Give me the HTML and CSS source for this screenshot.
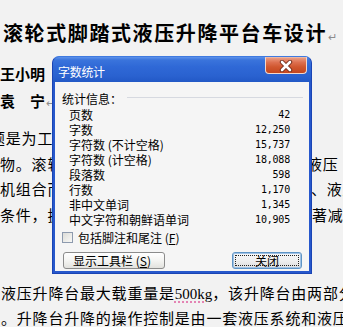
FILE: index.html
```html
<!DOCTYPE html>
<html lang="zh">
<head>
<meta charset="utf-8">
<link rel="stylesheet" href="styles.css">
</head>
<body>
<div class="doc">
  <div class="title">滚轮式脚踏式液压升降平台车设计<span class="ret">↵</span></div>
  <div class="author a1">王小明</div>
  <div class="author">袁　宁<span class="ret">↵</span></div>
  <div class="lines">
    <div class="line l1"><span class="left">题是为工业生产设计的一种</span></div>
    <div class="line"><span class="left w307">物。滚轮式脚踏式液压升降</span><span class="right">液压</span></div>
    <div class="line"><span class="left w311">机组合而成的升降装置具有</span><span class="right">、液压</span></div>
    <div class="line"><span class="left w312">条件，拢折叠方便体积小重</span><span class="right">著减</span></div>
    <div class="line"></div>
    <div class="line"></div>
    <div class="line l7"><span class="left">液压升降台最大载重量是<span class="latin">500kg</span>，该升降台由两部分</span></div>
    <div class="line"><span class="left">。升降台升降的操作控制是由一套液压系统和液压</span></div>
  </div>
</div>

<div class="dialog">
  <div class="titlebar">
    <span class="ttext">字数统计</span>
    <span class="closebtn">
      <svg width="18" height="12" viewBox="0 0 18 12">
        <path d="M5 2 L13 10 M13 2 L5 10" stroke="#6e2a18" stroke-width="4.4" stroke-linecap="round" fill="none"/>
        <path d="M5 2 L13 10 M13 2 L5 10" stroke="#ffffff" stroke-width="2.6" stroke-linecap="round" fill="none"/>
      </svg>
    </span>
  </div>
  <div class="client">
    <div class="group-head"><span>统计信息：</span><span class="rule"></span></div>
    <div class="stats">
      <span>页数</span><span class="num">42</span>
      <span>字数</span><span class="num">12,250</span>
      <span>字符数 (不计空格)</span><span class="num">15,737</span>
      <span>字符数 (计空格)</span><span class="num">18,088</span>
      <span>段落数</span><span class="num">598</span>
      <span>行数</span><span class="num">1,170</span>
      <span>非中文单词</span><span class="num">1,345</span>
      <span>中文字符和朝鲜语单词</span><span class="num">10,905</span>
    </div>
    <div class="check-row"><span class="checkbox"></span><span>包括脚注和尾注 (<u>F</u>)</span></div>
    <div class="btn-row">
      <span class="btn btn-tools">显示工具栏 (<u>S</u>)</span>
      <span class="btn btn-close"><span class="focus">关闭</span></span>
    </div>
  </div>
</div>
</body>
</html>
```

FILE: styles.css
```css
html, body {
  margin: 0;
  padding: 0;
}
body {
  width: 343px;
  height: 327px;
  overflow: hidden;
  background: #f2f2f2;
  position: relative;
  font-family: "Noto Sans CJK SC", "Noto Sans", sans-serif;
  color: #000;
}
.doc {
  padding-top: 18px;
}
.title {
  height: 30px;
  line-height: 30px;
  padding-left: 3px;
  font-size: 20px;
  font-weight: 700;
  letter-spacing: 1.6px;
  white-space: nowrap;
}
.ret {
  color: #8c8c8c;
  font-weight: 400;
  font-size: 11px;
  letter-spacing: 0;
  margin-left: 1px;
}
.author {
  line-height: 27px;
  font-size: 15px;
  font-weight: 700;
  white-space: nowrap;
}
.author.a1 {
  margin-top: 11.5px;
}
.lines {
  margin-top: 9.5px;
}
.line {
  display: flex;
  height: 25.7px;
  line-height: 25.7px;
  font-size: 15px;
  letter-spacing: 0.8px;
  white-space: nowrap;
  overflow: hidden;
  width: 343px;
}
.line .left {
  flex: none;
  overflow: hidden;
}
.line .right {
  flex: none;
}
.line .w307 { width: 307px; }
.line .w311 { width: 311px; }
.line .w312 { width: 312px; }
.line.l1 .left {
  margin-left: -11px;
}
.line.l7 {
  margin-top: 0.5px;
}
.line .left:only-child {
  padding-left: 1px;
}
.latin {
  font-family: "Liberation Serif", serif;
  letter-spacing: 0;
  text-decoration: underline dotted #e060a0;
  text-underline-offset: 3px;
}

/* dialog */
.dialog {
  position: absolute;
  left: 52px;
  top: 56px;
  width: 260px;
  height: 218px;
  box-sizing: border-box;
  border-radius: 7px 7px 0 0;
  background: #2758cc;
  border: 1px solid #1a44b4;
  border-top-color: #3f7ae0;
  padding: 0 2px 2px 2px;
  display: flex;
  flex-direction: column;
}
.titlebar {
  height: 25px;
  flex: none;
  display: flex;
  align-items: flex-start;
  justify-content: space-between;
  margin: 0 -2px;
  padding: 0 5px 0 5px;
  border-radius: 6px 6px 0 0;
  background: linear-gradient(to bottom, #5d92ea 0%, #3a74dc 12%, #2f68d6 40%, #2a62d0 75%, #2258c6 100%);
}
.ttext {
  color: #fff;
  font-size: 12px;
  line-height: 14px;
  margin-top: 8px;
  letter-spacing: -0.3px;
}
.closebtn {
  width: 42px;
  height: 17px;
  margin-right: -1px;
  box-sizing: border-box;
  border: 1px solid #f3d7cc;
  border-top-color: #e9b6a4;
  border-radius: 0 0 4px 4px;
  background: linear-gradient(to bottom, #eb9a80 0%, #dd6f4f 30%, #d0572f 60%, #c4461f 100%);
  display: flex;
  align-items: center;
  justify-content: center;
}
.closebtn svg {
  display: block;
}
.client {
  flex: 1;
  background: #f5f5f5;
  display: flex;
  flex-direction: column;
  font-size: 12px;
  line-height: 15px;
}
.group-head {
  display: flex;
  align-items: center;
  margin-top: 9px;
  padding: 0 6px 0 7px;
  height: 15px;
}
.group-head .rule {
  flex: 1;
  height: 1px;
  background: #d6d9e0;
  margin-left: 5px;
  margin-top: -3px;
}
.stats {
  display: grid;
  grid-template-columns: 1fr auto;
  grid-auto-rows: 15px;
  margin: 1px 0 0 14px;
  width: 221px;
}
.num {
  text-align: right;
  font-family: "DejaVu Sans Mono", monospace;
  font-size: 10px;
  letter-spacing: -0.2px;
}
.check-row {
  display: flex;
  align-items: center;
  height: 15px;
  margin-top: 3px;
  padding-left: 7px;
  gap: 5px;
}
.checkbox {
  width: 11px;
  height: 11px;
  box-sizing: border-box;
  border: 1px solid #8d9aae;
  background: linear-gradient(135deg, #dcdcd8, #f8f8f6);
}
.btn-row {
  display: flex;
  justify-content: space-between;
  margin-top: 7px;
  padding: 0 7px 0 8px;
}
.btn {
  height: 17px;
  box-sizing: border-box;
  border-radius: 3px;
  display: flex;
  align-items: center;
  justify-content: center;
  font-size: 12px;
  line-height: 13px;
}
.btn-tools {
  width: 102px;
  border: 1px solid #8b8b8b;
  background: linear-gradient(to bottom, #ffffff 0%, #f4f4f2 50%, #e2e2de 100%);
  padding-right: 4px;
}
.btn-close {
  width: 70px;
  border: 1px solid #5f94c4;
  box-shadow: inset 0 0 0 1px #9fc2e6;
  background: linear-gradient(to bottom, #f8f8f8 0%, #efefef 50%, #dedede 100%);
  padding: 2px;
}
.btn-close .focus {
  flex: 1;
  align-self: stretch;
  border: 1px dotted #222;
  display: flex;
  align-items: center;
  justify-content: center;
}
```
